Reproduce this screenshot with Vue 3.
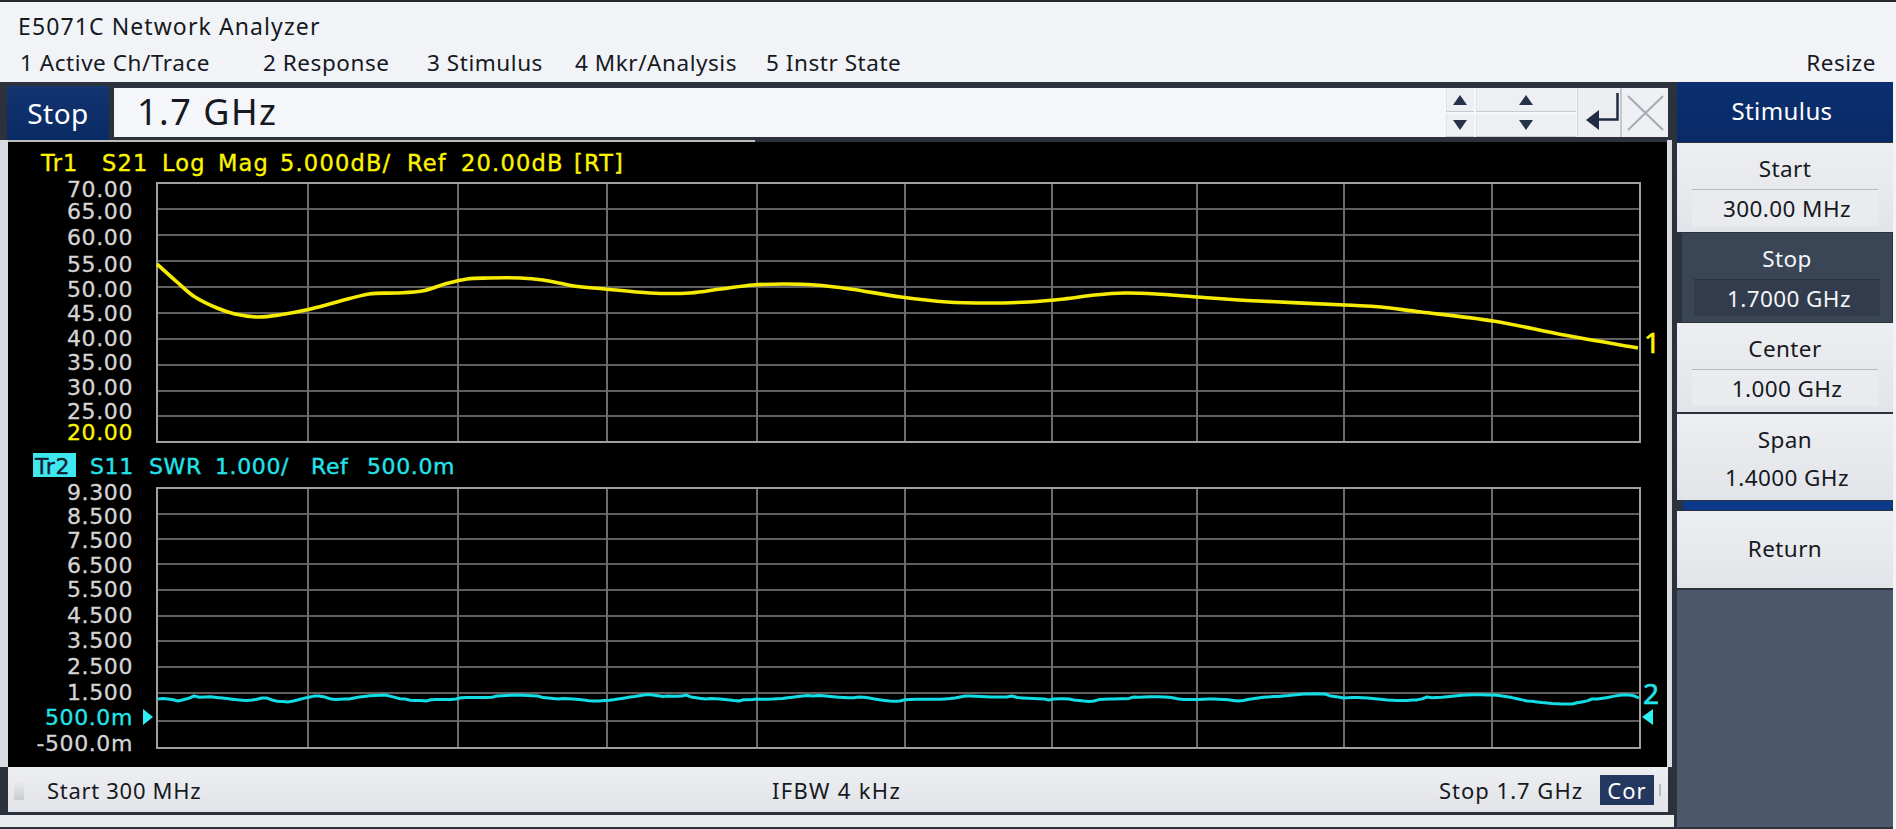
<script setup>
const xs = [308, 458, 607, 757, 905, 1052, 1197, 1344, 1492]
const y1 = [209, 235, 261, 287, 313, 339, 365, 391, 416]
const y2 = [514, 539, 564, 590, 616, 641, 667, 693, 721]

const labels1 = [
  ['70.00', 189], ['65.00', 211], ['60.00', 237], ['55.00', 264], ['50.00', 289], ['45.00', 313],
  ['40.00', 338], ['35.00', 362], ['30.00', 387], ['25.00', 411]
]
const labels2 = [
  ['9.300', 492], ['8.500', 516], ['7.500', 540], ['6.500', 565], ['5.500', 589], ['4.500', 615],
  ['3.500', 640], ['2.500', 666], ['1.500', 692], ['-500.0m', 743]
]
const head1 = [['Tr1', 41], ['S21', 102], ['Log', 162], ['Mag', 218], ['5.000dB/', 280], ['Ref', 407], ['20.00dB', 461], ['[RT]', 574]]
const head2 = [['S11', 90], ['SWR', 149], ['1.000/', 215], ['Ref', 311], ['500.0m', 367]]

const t1 = [
  [157,264],[177,282],[195,297],[217,308],[235,314],[257,317],[279,315],[306,310],[337,302],[369,294],[396,293],[422,291],
  [445,284],[467,279],[489,278],[520,278],[543,280],[574,286],[605,289],[650,293],[690,293],[721,289],[753,285],[784,284],
  [815,285],[850,289],[901,297],[947,302],[988,303],[1029,302],[1064,299],[1095,295],[1125,293],[1156,294],[1197,297],
  [1258,301],[1345,305],[1381,307],[1421,312],[1493,321],[1564,335],[1638,348]
]
function smooth(p) {
  let d = `M${p[0][0]} ${p[0][1]}`
  for (let i = 0; i < p.length - 1; i++) {
    const a = p[i - 1] || p[i], b = p[i], c = p[i + 1], e = p[i + 2] || c
    const c1x = b[0] + (c[0] - a[0]) / 6, c1y = b[1] + (c[1] - a[1]) / 6
    const c2x = c[0] - (e[0] - b[0]) / 6, c2y = c[1] - (e[1] - b[1]) / 6
    d += ` C${c1x.toFixed(1)} ${c1y.toFixed(1)} ${c2x.toFixed(1)} ${c2y.toFixed(1)} ${c[0]} ${c[1]}`
  }
  return d
}
const path1 = smooth(t1)

const t2 = [
  [158,699],[178,701],[194,696],[205,697],[222,698],[252,700],[262,698],[272,700],[288,702],[319,696],[331,699],[349,699],[385,695],
  [405,699],[426,701],[456,699],[497,696],[538,696],[558,699],[594,701],[630,697],[653,695],[668,696],[686,695],[706,699],[739,701],
  [757,699],[813,696],[859,697],[900,701],[960,697],[1012,696],[1049,700],[1069,699],[1094,701],[1134,697],[1174,698],[1238,701],
  [1283,696],[1325,694],[1343,698],[1412,700],[1427,697],[1492,695],[1527,701],[1572,704],[1592,699],[1629,695],[1639,698]
]
function jagged(p) {
  const out = []
  for (let i = 0; i < p.length - 1; i++) {
    const [ax, ay] = p[i], [bx, by] = p[i + 1]
    const n = Math.max(1, Math.round((bx - ax) / 5))
    for (let k = 0; k < n; k++) {
      const s = k / n
      const j = k === 0 ? 0 : Math.sin((ax + k) * 12.9898) * 0.9
      out.push(`${(ax + (bx - ax) * s).toFixed(1)},${(ay + (by - ay) * s + j).toFixed(1)}`)
    }
  }
  out.push(p[p.length - 1].join(','))
  return out.join(' ')
}
const path2 = jagged(t2)
</script>

<template>
  <div class="app">
    <header class="title">E5071C Network Analyzer</header>
    <nav class="menu">
      <span>1 Active Ch/Trace</span>
      <span>2 Response</span>
      <span>3 Stimulus</span>
      <span>4 Mkr/Analysis</span>
      <span>5 Instr State</span>
      <span class="resize">Resize</span>
    </nav>
    <div class="main">
      <section class="left">
        <div class="entry">
          <div class="entry-name">Stop</div>
          <div class="entry-input">
            <span class="entry-value">1.7 GHz</span>
            <div class="spin">
              <div class="sbtn"><i class="up"></i></div>
              <div class="sbtn wide"><i class="up"></i></div>
              <div class="sbtn"><i class="down"></i></div>
              <div class="sbtn wide"><i class="down"></i></div>
            </div>
            <div class="enter">
              <svg width="42" height="48" viewBox="0 0 42 48">
                <path d="M8 32 L21 22 V42 Z" fill="#1f2c42" />
                <path d="M20 31.5 H39.5 V5" fill="none" stroke="#1f2c42" stroke-width="2.5" />
              </svg>
            </div>
            <div class="cancel">
              <svg width="48" height="48" viewBox="0 0 48 48">
                <path d="M6 8 L41 42 M41 8 L6 42" stroke="#a4abb5" stroke-width="2" fill="none" />
              </svg>
            </div>
          </div>
        </div>
        <div class="chart-wrap">
          <svg class="chart" width="1659" height="625" viewBox="8 142 1659 625">
            <!-- trace 1 -->
            <g stroke="#5f5f5f" stroke-width="2">
              <line v-for="y in y1" :key="'a' + y" x1="157" x2="1640" :y1="y" :y2="y" />
              <line v-for="x in xs" :key="'b' + x" :x1="x" :x2="x" y1="183" y2="442" stroke="#6c6c6c" />
            </g>
            <rect x="157" y="183" width="1483" height="259" fill="none" stroke="#a0a0a0" stroke-width="2" />
            <g class="hd hd1 yellow">
              <text v-for="h in head1" :key="h[0]" :x="h[1]" y="171">{{ h[0] }}</text>
            </g>
            <g class="ax">
              <text v-for="l in labels1" :key="l[0]" x="133" :y="l[1] + 8">{{ l[0] }}</text>
            </g>
            <text class="ax yellow" x="133" y="440">20.00</text>
            <path :d="path1" fill="none" stroke="#f6ec00" stroke-width="3.6" stroke-linejoin="round" />
            <text class="mark yellow" x="1644" y="353">1</text>

            <!-- trace 2 -->
            <g stroke="#5f5f5f" stroke-width="2">
              <line v-for="y in y2" :key="'c' + y" x1="157" x2="1640" :y1="y" :y2="y" />
              <line v-for="x in xs" :key="'d' + x" :x1="x" :x2="x" y1="488" y2="748" stroke="#6c6c6c" />
            </g>
            <rect x="157" y="488" width="1483" height="260" fill="none" stroke="#a0a0a0" stroke-width="2" />
            <rect x="33" y="453" width="43" height="24" fill="#3fe8ee" />
            <text class="hd hd2 dark" x="35" y="474">Tr2</text>
            <g class="hd hd2 cyan">
              <text v-for="h in head2" :key="h[0]" :x="h[1]" y="474">{{ h[0] }}</text>
            </g>
            <g class="ax">
              <text v-for="l in labels2" :key="l[0]" x="133" :y="l[1] + 8">{{ l[0] }}</text>
            </g>
            <text class="ax cyan" x="133" y="725">500.0m</text>
            <path d="M143 709 L153 717 L143 725 Z" fill="#2ff0f5" />
            <polyline :points="path2" fill="none" stroke="#12dce4" stroke-width="3" stroke-linejoin="round" />
            <text class="mark cyan" x="1643" y="704">2</text>
            <path d="M1653 709 L1642 717 L1653 725 Z" fill="#2ff0f5" />
          </svg>
        </div>
        <footer class="status">
          <div class="grip"></div>
          <span class="st-start">Start 300 MHz</span>
          <span class="st-ifbw">IFBW 4 kHz</span>
          <span class="st-stop">Stop 1.7 GHz</span>
          <span class="cor">Cor</span>
          <i class="tick"></i>
        </footer>
        <div class="band"></div>
      </section>
      <aside class="side">
        <div class="side-head">Stimulus</div>
        <div class="key">
          <div class="k-label">Start</div>
          <div class="k-val ruled">300.00 MHz</div>
        </div>
        <div class="key active">
          <div class="k-label">Stop</div>
          <div class="k-val ruled">1.7000 GHz</div>
        </div>
        <div class="key tall">
          <div class="k-label">Center</div>
          <div class="k-val ruled">1.000 GHz</div>
        </div>
        <div class="key span">
          <div class="k-label">Span</div>
          <div class="k-val">1.4000 GHz</div>
        </div>
        <div class="blue"></div>
        <div class="key ret">Return</div>
        <div class="empty"></div>
      </aside>
    </div>
  </div>
</template>

<style scoped>
.app {
  width: 1896px;
  height: 829px;
  box-sizing: border-box;
  border-top: 2px solid #23272e;
  background: #f1f3f7;
  display: flex;
  flex-direction: column;
  font-family: "Noto Sans", "Liberation Sans", sans-serif;
  color: #16191f;
  overflow: hidden;
}
.title {
  height: 42px;
  padding-left: 18px;
  font-size: 23px;
  letter-spacing: 1.1px;
  line-height: 48px;
  flex: none;
}
.menu {
  height: 38px;
  flex: none;
  display: grid;
  grid-template-columns: 243px 164px 148px 191px 1fr auto;
  padding: 0 20px 0 20px;
  font-size: 22.5px;
  letter-spacing: 0.55px;
  line-height: 38px;
}
.main {
  flex: 1;
  min-height: 0;
  display: flex;
}
.left {
  width: 1677px;
  flex: none;
  background: #2c323c;
  display: flex;
  flex-direction: column;
  box-sizing: border-box;
  padding-top: 4px;
}
.entry {
  display: flex;
  height: 54px;
  flex: none;
  padding-left: 7px;
  gap: 5px;
}
.entry-name {
  width: 102px;
  background: linear-gradient(#12346f, #0a2a64);
  color: #fff;
  font-size: 28px;
  letter-spacing: 0.5px;
  line-height: 54px;
  text-align: center;
}
.entry-input {
  width: 1554px;
  margin-top: 2px;
  height: 49px;
  background: #f4f6f9;
  display: flex;
  align-items: stretch;
}
.entry-value {
  flex: 1;
  padding-left: 23px;
  font-size: 36px;
  letter-spacing: 1.5px;
  line-height: 47px;
}
.spin {
  width: 130px;
  display: grid;
  grid-template-columns: 28px 100px;
  grid-template-rows: 1fr 1fr;
  gap: 2px;
}
.sbtn {
  background: #edeff3;
  display: flex;
  align-items: center;
  justify-content: center;
  box-shadow: inset 0 -1px 0 #c8ccd2, inset 1px 0 0 #e0e2e6;
}
.sbtn i {
  width: 0;
  height: 0;
  border-left: 7px solid transparent;
  border-right: 7px solid transparent;
}
.sbtn .up { border-bottom: 10px solid #25324a; }
.sbtn .down { border-top: 10px solid #25324a; }
.enter {
  width: 42px;
  margin-left: 1px;
  background: #eceef2;
  border-left: 1px solid #d0d3d8;
}
.enter svg, .cancel svg { display: block; }
.cancel {
  width: 48px;
  background: #eef0f3;
  border-left: 2px solid #c5c8ce;
  box-sizing: border-box;
}
.chart-wrap {
  height: 627px;
  flex: none;
  display: flex;
  width: 1672px;
  box-sizing: border-box;
  padding-top: 2px;
  background: linear-gradient(to right, #bcbcbc 45%, #2c323c 45%);
  border-left: 8px solid #d8dbe0;
  border-right: 5px solid #d8dbe0;
}
.chart { display: block; background: #000; overflow: hidden; }
.hd { font-family: "DejaVu Sans", sans-serif; font-size: 22px; stroke-width: 0.35px; }
.hd1 { font-size: 22.5px; letter-spacing: 1.2px; }
.hd2 { letter-spacing: 0.6px; }
.ax { font-family: "DejaVu Sans", sans-serif; font-size: 22px; letter-spacing: 0.6px; fill: #d4d4d4; stroke: #d4d4d4; stroke-width: 0.3px; text-anchor: end; }
.yellow { fill: #fcf400; stroke: #fcf400; }
.cyan { fill: #22e4ea; stroke: #22e4ea; }
.dark { fill: #102030; stroke: #102030; }
.mark { font-family: "Noto Sans", sans-serif; font-size: 28px; stroke-width: 0.6px; }
.status {
  height: 45px;
  flex: none;
  margin-left: 8px;
  width: 1660px;
  background: linear-gradient(#eceef1, #e2e4e9);
  display: grid;
  grid-template-columns: 39px 725px 667px 161px auto 1fr;
  align-items: center;
  font-size: 22px;
  letter-spacing: 1px;
}
.st-start { letter-spacing: 0.7px; }
.st-ifbw { letter-spacing: 1.3px; }
.grip {
  width: 10px;
  height: 20px;
  margin-left: 6px;
  background: linear-gradient(#eee, #c9ccd2);
}
.cor {
  width: 54px;
  height: 30px;
  line-height: 30px;
  text-align: center;
  background: #24375f;
  color: #fff;
}
.tick {
  display: block;
  width: 2px;
  height: 12px;
  margin-left: 5px;
  background: #b6bac1;
}
.band {
  height: 12px;
  flex: none;
  margin-top: 3px;
  width: 1674px;
  background: #e9ebef;
}
.side {
  width: 216px;
  flex: none;
  display: flex;
  flex-direction: column;
  background: #2c323c;
  font-size: 22.5px;
  letter-spacing: 0.4px;
  text-align: center;
}
.side-head {
  height: 60px;
  flex: none;
  padding-right: 6px;
  background: linear-gradient(#0b2f70, #0a2a66);
  color: #fff;
  line-height: 58px;
  font-size: 24px;
}
.key {
  flex: none;
  height: 89px;
  margin-top: 1px;
  background: linear-gradient(#eceef1, #e2e4e9);
  padding-top: 11px;
  box-sizing: border-box;
}
.k-label { height: 35px; line-height: 30px; }
.k-val {
  margin: 0 15px;
  height: 37px;
  padding-left: 4px;
  box-sizing: border-box;
  line-height: 37px;
}
.ruled { border-top: 1px solid #b4bac4; background: #e9ebef; }
.key.active {
  margin: 1px 1px 0 5px;
  height: 89px;
  background: #3a4556;
  color: #f4f6f8;
}
.key.active .k-val { background: #323c4c; border-top-color: #2a3340; margin: 0 12px; }
.key.tall { height: 89px; }
.key.span { height: 86px; margin-top: 2px; }
.key.span .k-label { height: 34px; }
.blue {
  height: 9px;
  flex: none;
  margin: 1px 1px 1px 6px;
  background: #0b3a8a;
}
.key.ret {
  height: 77px;
  margin-top: 0;
  padding-top: 0;
  line-height: 75px;
}
.empty {
  flex: 1;
  margin: 2px 0 2px;
  background: #4b586b;
}
</style>

<style>
body { margin: 0; }
</style>
